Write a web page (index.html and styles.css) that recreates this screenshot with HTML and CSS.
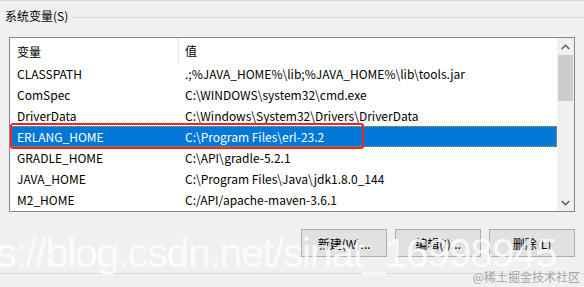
FILE: index.html
```html
<!DOCTYPE html>
<html lang="zh-CN">
<head>
    <meta charset="UTF-8">
    <title>系统变量</title>
    <link rel="stylesheet" href="styles.css">
</head>
<body>

<div class="panel">
    <div class="group-title">
        <span>系统变量(S)</span>
    </div>

    <div class="listbox">
        <div class="list">
            <div class="row head">
                <div class="col name">变量</div>
                <div class="col value">值</div>
            </div>
            <div class="row">
                <div class="col name">CLASSPATH</div>
                <div class="col value">.;%JAVA_HOME%\lib;%JAVA_HOME%\lib\tools.jar</div>
            </div>
            <div class="row">
                <div class="col name">ComSpec</div>
                <div class="col value">C:\WINDOWS\system32\cmd.exe</div>
            </div>
            <div class="row">
                <div class="col name">DriverData</div>
                <div class="col value">C:\Windows\System32\Drivers\DriverData</div>
            </div>
            <div class="row selected">
                <div class="col name">ERLANG_HOME</div>
                <div class="col value">C:\Program Files\erl-23.2</div>
                <div class="mark"></div>
            </div>
            <div class="row">
                <div class="col name">GRADLE_HOME</div>
                <div class="col value">C:\API\gradle-5.2.1</div>
            </div>
            <div class="row">
                <div class="col name">JAVA_HOME</div>
                <div class="col value">C:\Program Files\Java\jdk1.8.0_144</div>
            </div>
            <div class="row">
                <div class="col name">M2_HOME</div>
                <div class="col value">C:/API/apache-maven-3.6.1</div>
            </div>
        </div>
        <div class="scrollbar">
            <div class="arrow">
                <svg width="9" height="6" viewBox="0 0 9 6"><path d="M0.7 5 L4.5 1.3 L8.3 5" fill="none" stroke="#606060" stroke-width="1.6"/></svg>
            </div>
            <div class="thumb"></div>
            <div class="track"></div>
            <div class="arrow">
                <svg width="9" height="6" viewBox="0 0 9 6"><path d="M0.7 1 L4.5 4.7 L8.3 1" fill="none" stroke="#606060" stroke-width="1.6"/></svg>
            </div>
        </div>
    </div>

    <div class="buttons">
        <button type="button">新建(W)...</button>
        <button type="button">编辑(I)...</button>
        <button type="button">删除(L)</button>
    </div>

    <div class="bottom-line"></div>
</div>

<div class="watermark">https://blog.csdn.net/sinat_16998945</div>
<div class="credit">@稀土掘金技术社区</div>

</body>
</html>
```

FILE: styles.css
```css
body {
    margin: 0;
    background: #f0f0f0;
    font-family: "Noto Sans CJK SC", "Noto Sans", sans-serif;
    font-size: 12px;
    color: #000;
    width: 584px;
    height: 287px;
    overflow: hidden;
    position: relative;
}

.panel {
    border-top: 1px solid #dadada;
    height: 286px;
}

.group-title {
    display: flex;
    align-items: center;
    height: 33px;
}

.group-title span {
    padding: 0 4px 0 5px;
    line-height: 16px;
    margin-top: -3px;
}

.group-title::after {
    content: "";
    flex: 1;
    border-top: 1px solid #dcdcdc;
    margin-top: -1px;
}

.listbox {
    margin: 3px 0 0 9px;
    width: 564px;
    height: 173px;
    border: 1px solid #828790;
    background: #fff;
    display: flex;
}

.list {
    flex: 1;
    overflow: hidden;
}

.row {
    display: flex;
    height: 21px;
    align-items: center;
    position: relative;
}

.row.head {
    height: 25px;
}

.col {
    white-space: nowrap;
    padding-left: 7px;
}

.name {
    width: 161px;
}

.head .name {
    border-right: 1px solid #e5e5e5;
    height: 25px;
    line-height: 27px;
}

.head .value {
    padding-left: 6px;
    line-height: 27px;
}

.value {
    flex: 1;
}

.selected {
    background: #0078d7;
    color: #fff;
    outline: 1px dotted #e08a30;
    outline-offset: -1px;
}

.mark {
    position: absolute;
    left: 0;
    top: -3px;
    width: 350px;
    height: 22px;
    border: 2px solid #f0271d;
    border-radius: 3px;
}

.scrollbar {
    width: 17px;
    display: flex;
    flex-direction: column;
    background: #f0f0f0;
}

.arrow {
    height: 17px;
    display: flex;
    align-items: center;
    justify-content: center;
}

.thumb {
    height: 46px;
    background: #cdcdcd;
    margin: 0 1px;
}

.track {
    flex: 1;
}

.buttons {
    display: flex;
    justify-content: flex-end;
    gap: 8px;
    margin: 17px 9px 0 0;
}

button {
    width: 86px;
    height: 28px;
    background: #e1e1e1;
    border: 1px solid #adadad;
    font-family: "Noto Sans CJK SC", "Noto Sans", sans-serif;
    font-size: 12px;
    color: #000;
    padding: 0;
}

.bottom-line {
    margin-top: 16px;
    border-top: 1px solid #dadada;
}

.watermark {
    position: absolute;
    left: -67px;
    top: 230px;
    font-family: "Liberation Sans", Arial, sans-serif;
    font-size: 41px;
    line-height: 46px;
    letter-spacing: -1.3px;
    color: rgba(255, 255, 255, 0.8);
    white-space: nowrap;
}

.credit {
    position: absolute;
    right: 4px;
    top: 269px;
    font-size: 12px;
    color: #a6a6a6;
    line-height: 16px;
}
```
